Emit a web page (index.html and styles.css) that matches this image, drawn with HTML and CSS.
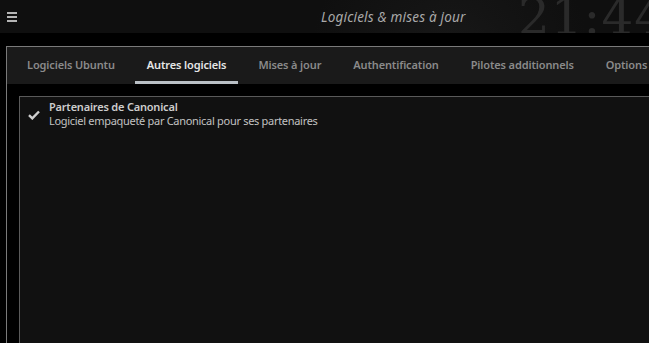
FILE: index.html
```html
<!DOCTYPE html>
<html lang="fr">
<head>
<meta charset="utf-8">
<title>Logiciels &amp; mises à jour</title>
<link rel="stylesheet" href="styles.css">
</head>
<body>
<header class="topbar">
  <div class="menu-icon"><span></span><span></span><span></span></div>
  <div class="title">Logiciels &amp; mises à jour</div>
  <div class="clock">21:44</div>
</header>
<main class="frame">
  <nav class="tabs">
    <div class="tab">Logiciels Ubuntu</div>
    <div class="tab active">Autres logiciels</div>
    <div class="tab">Mises à jour</div>
    <div class="tab">Authentification</div>
    <div class="tab">Pilotes additionnels</div>
    <div class="tab">Options</div>
  </nav>
  <section class="panel">
    <div class="row">
      <svg class="check" width="12" height="10" viewBox="0 0 12 10"><path d="M1 5.2 L4.3 8.4 L11 1.5" fill="none" stroke="#cfcfcf" stroke-width="2.4"/></svg>
      <div class="row-text">
        <div class="row-title">Partenaires de Canonical</div>
        <div class="row-sub">Logiciel empaqueté par Canonical pour ses partenaires</div>
      </div>
    </div>
  </section>
</main>
</body>
</html>
```
FILE: styles.css
```css
html, body {
  margin: 0;
  padding: 0;
  background: #000;
  overflow: hidden;
  width: 649px;
  height: 343px;
  font-family: "Noto Sans", "Open Sans", sans-serif;
}
.topbar {
  height: 33px;
  background: radial-gradient(circle at 450px 60px, #191919 0, #141414 60px, #0f0f0f 140px), #0f0f0f;
  display: flex;
  align-items: center;
  position: relative;
  overflow: hidden;
}
.menu-icon {
  display: flex;
  flex-direction: column;
  gap: 2px;
  margin-left: 7px;
  width: 10px;
}
.menu-icon span {
  display: block;
  height: 2px;
  background: #b5b5b5;
}
.title {
  margin-left: 304px;
  font-style: italic;
  font-size: 13.5px;
  color: #a9a9a9;
  letter-spacing: 0.2px;
}
.clock {
  position: absolute;
  left: 518px;
  top: -12px;
  font-family: "DejaVu Serif", "Liberation Serif", serif;
  font-weight: 200;
  font-size: 50px;
  color: #2a2a2a;
  letter-spacing: 1px;
}
.frame {
  margin: 13px 0 0 6px;
  border-top: 1px solid #7a7a7a;
  border-left: 1px solid #7a7a7a;
  height: 400px;
}
.tabs {
  display: flex;
  height: 37px;
  background: #1a1a1a;
  padding-left: 4px;
  white-space: nowrap;
}
.tab {
  padding: 0 16px;
  font-size: 11px;
  font-weight: 600;
  letter-spacing: -0.13px;
  color: #8a8a8a;
  display: flex;
  align-items: center;
  position: relative;
  padding-bottom: 2px;
}
.tab.active {
  color: #e6e6e6;
}
.tab.active::after {
  content: "";
  position: absolute;
  left: 4px;
  right: 4px;
  bottom: 0;
  height: 3px;
  background: #b9bfc5;
}
.panel {
  margin: 12px 0 0 12px;
  border-top: 1px solid #5a5a5a;
  border-left: 1px solid #5a5a5a;
  background: #111;
  height: 300px;
}
.row {
  display: flex;
  align-items: center;
  padding: 3px 0 0 8px;
}
.check {
  margin-right: 9px;
  margin-top: 2px;
}
.row-title {
  font-size: 11px;
  font-weight: 600;
  letter-spacing: -0.2px;
  color: #cdcdcd;
  line-height: 14px;
}
.row-sub {
  font-size: 11px;
  letter-spacing: -0.3px;
  color: #c2c2c2;
  line-height: 14px;
}
```
